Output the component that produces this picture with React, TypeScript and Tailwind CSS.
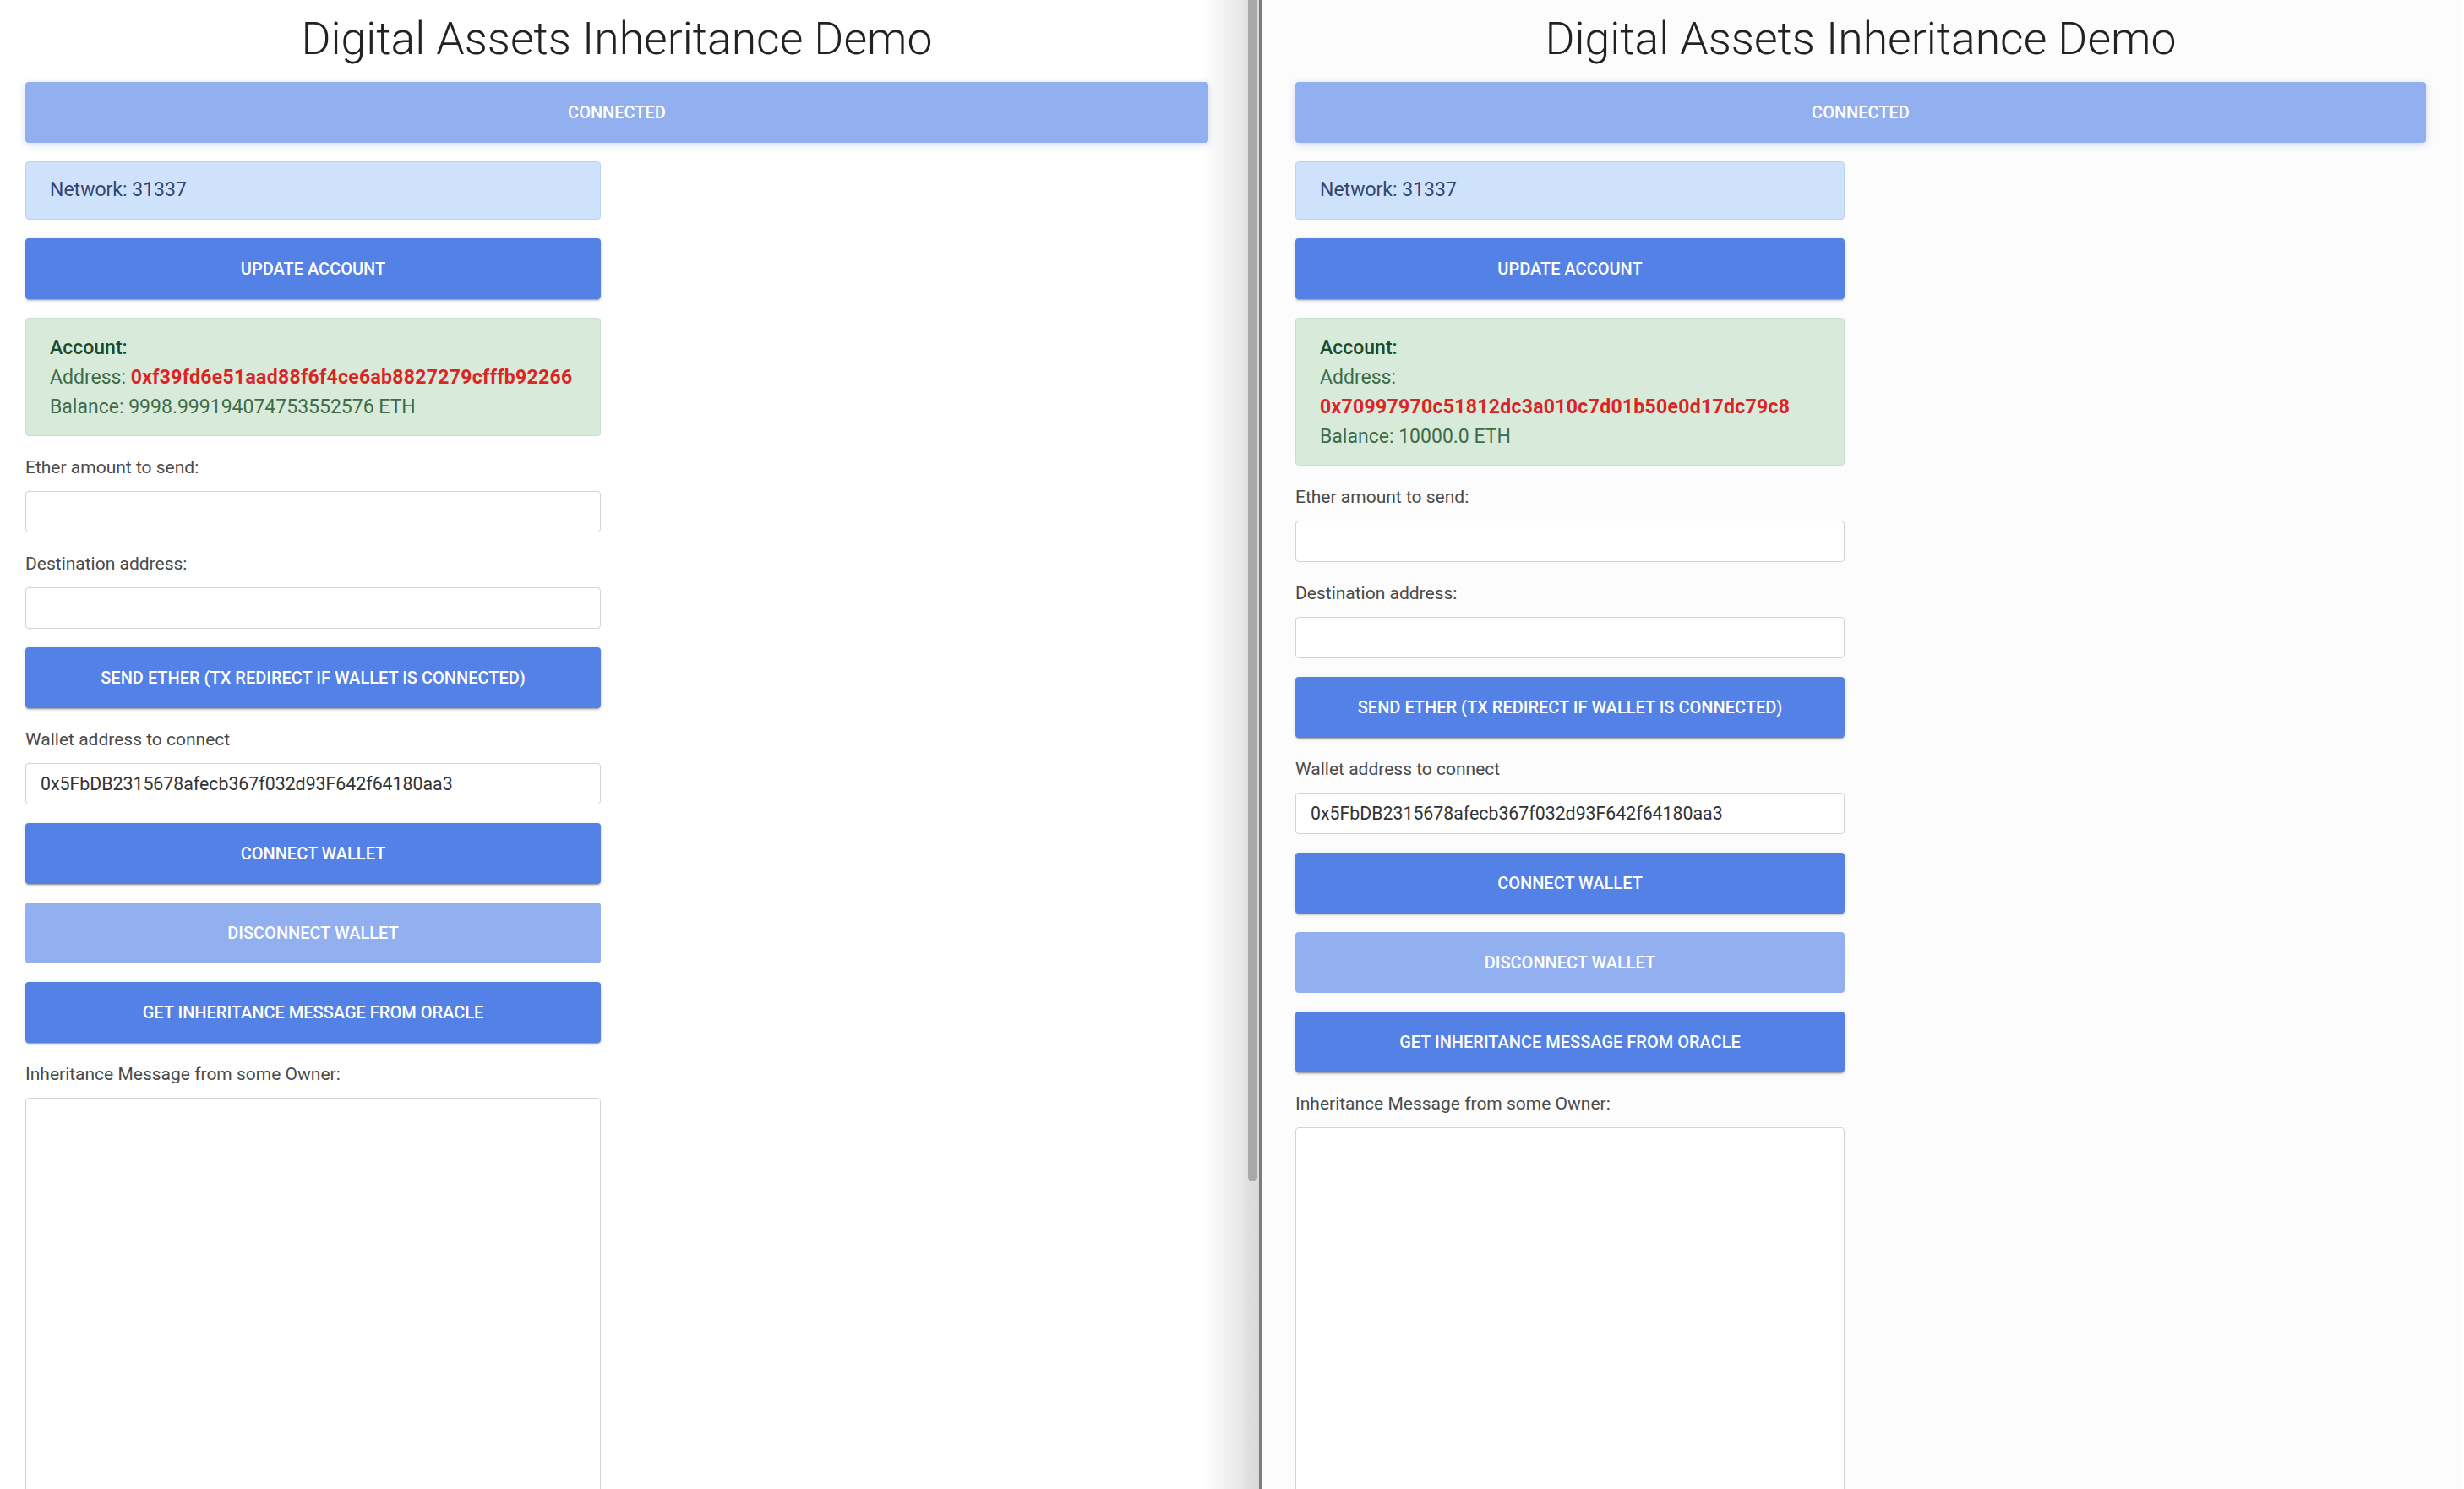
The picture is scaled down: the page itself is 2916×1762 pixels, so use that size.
import React from "react";

const btnShadow =
  "shadow-[0_3px_1px_-2px_rgba(0,0,0,0.2),0_2px_2px_0_rgba(0,0,0,0.14),0_1px_5px_0_rgba(0,0,0,0.12)]";

function Button({ label, light = false }: { label: string; light?: boolean }) {
  return (
    <button
      className={`flex h-[72px] w-full items-center justify-center rounded-[4px] text-[20px] font-medium uppercase text-white ${
        light ? "bg-[#92aff0]" : `bg-[#5381e6] ${btnShadow}`
      }`}
    >
      {label}
    </button>
  );
}

function Field({ label, value = "" }: { label: string; value?: string }) {
  return (
    <div className="flex flex-col">
      <label className="mb-[13px] text-[21px] leading-[30px] text-[#4a4a4a]">{label}</label>
      <input
        readOnly
        value={value}
        className="h-[49px] w-full rounded-[4px] border border-[#cfd4da] bg-white px-[17px] text-[21.3px] text-[#333333] outline-none"
      />
    </div>
  );
}

type PaneProps = {
  address: string;
  balance: string;
  breakAddress?: boolean;
};

function Pane({ address, balance, breakAddress = false }: PaneProps) {
  return (
    <div className="flex flex-col">
      <h1 className="pt-4 text-center text-[53.5px] font-light leading-[60px] text-[#222222]">
        Digital Assets Inheritance Demo
      </h1>

      {/* status bar */}
      <div className="mt-[21px] flex h-[72px] w-full items-center justify-center rounded-[4px] bg-[#92aff0] text-[20px] font-medium uppercase text-white shadow-[0_2px_8px_rgba(80,110,200,0.25)]">
        Connected
      </div>

      <div className="mt-[22px] flex w-[calc(50%-19px)] flex-col gap-[22px]">
        <div className="flex h-[69px] items-center rounded-[4px] border border-[#b9d3f7] bg-[#cfe2fb] px-[28px] text-[23px] text-[#34466e]">
          Network: 31337
        </div>

        <Button label="Update account" />

        <div className="rounded-[4px] border border-[#c6e0cc] bg-[#d8ebdb] px-[28px] pb-[16px] pt-[17px] text-[23px] leading-[35px] text-[#3f6b48]">
          <div className="font-medium text-[#1f4a29]">Account:</div>
          {breakAddress ? (
            <>
              <div>Address:</div>
              <div className="font-bold tracking-[0.3px] text-[#db2424]">{address}</div>
            </>
          ) : (
            <div className="whitespace-nowrap">
              Address: <span className="font-bold tracking-[0.3px] text-[#db2424]">{address}</span>
            </div>
          )}
          <div>Balance: {balance} ETH</div>
        </div>

        <Field label="Ether amount to send:" />
        <Field label="Destination address:" />

        <Button label="Send ether (tx redirect if wallet is connected)" />

        <Field label="Wallet address to connect" value="0x5FbDB2315678afecb367f032d93F642f64180aa3" />

        <Button label="Connect wallet" />
        <Button label="Disconnect wallet" light />
        <Button label="Get inheritance message from oracle" />

        <div className="flex flex-col">
          <label className="mb-[13px] text-[21px] leading-[30px] text-[#4a4a4a]">
            Inheritance Message from some Owner:
          </label>
          <textarea
            readOnly
            className="h-[640px] w-full resize-none rounded-[4px] border border-[#cfd4da] bg-white outline-none"
          />
        </div>
      </div>
    </div>
  );
}

export default function App() {
  return (
    <div className="flex h-[1762px] w-[2916px] overflow-hidden bg-white font-['Roboto',sans-serif]">
      {/* left window */}
      <div className="w-[1472px] shrink-0 bg-[linear-gradient(to_right,#ffffff_calc(100%-48px),#e6e6e6)] pl-[30px] pr-[42px]">
        <Pane
          address="0xf39fd6e51aad88f6f4ce6ab8827279cfffb92266"
          balance="9998.999194074753552576"
        />
      </div>

      {/* scrollbar */}
      <div className="w-[18px] shrink-0 bg-[linear-gradient(to_right,#e3e3e3,#d9d9d9)] pl-[5px]">
        <div className="h-[1398px] w-[10px] rounded-b-full bg-[#a9a9a9]" />
      </div>
      <div className="w-[3px] shrink-0 bg-[#7d7d7d]" />

      {/* right window */}
      <div className="w-[1419px] shrink-0 bg-[#fcfcfc] pl-[40px] pr-[41px]">
        <Pane
          address="0x70997970c51812dc3a010c7d01b50e0d17dc79c8"
          balance="10000.0"
          breakAddress
        />
      </div>
      <div className="w-[1px] shrink-0 bg-[#d6d6d6]" />
      <div className="flex-1 bg-white" />
    </div>
  );
}
